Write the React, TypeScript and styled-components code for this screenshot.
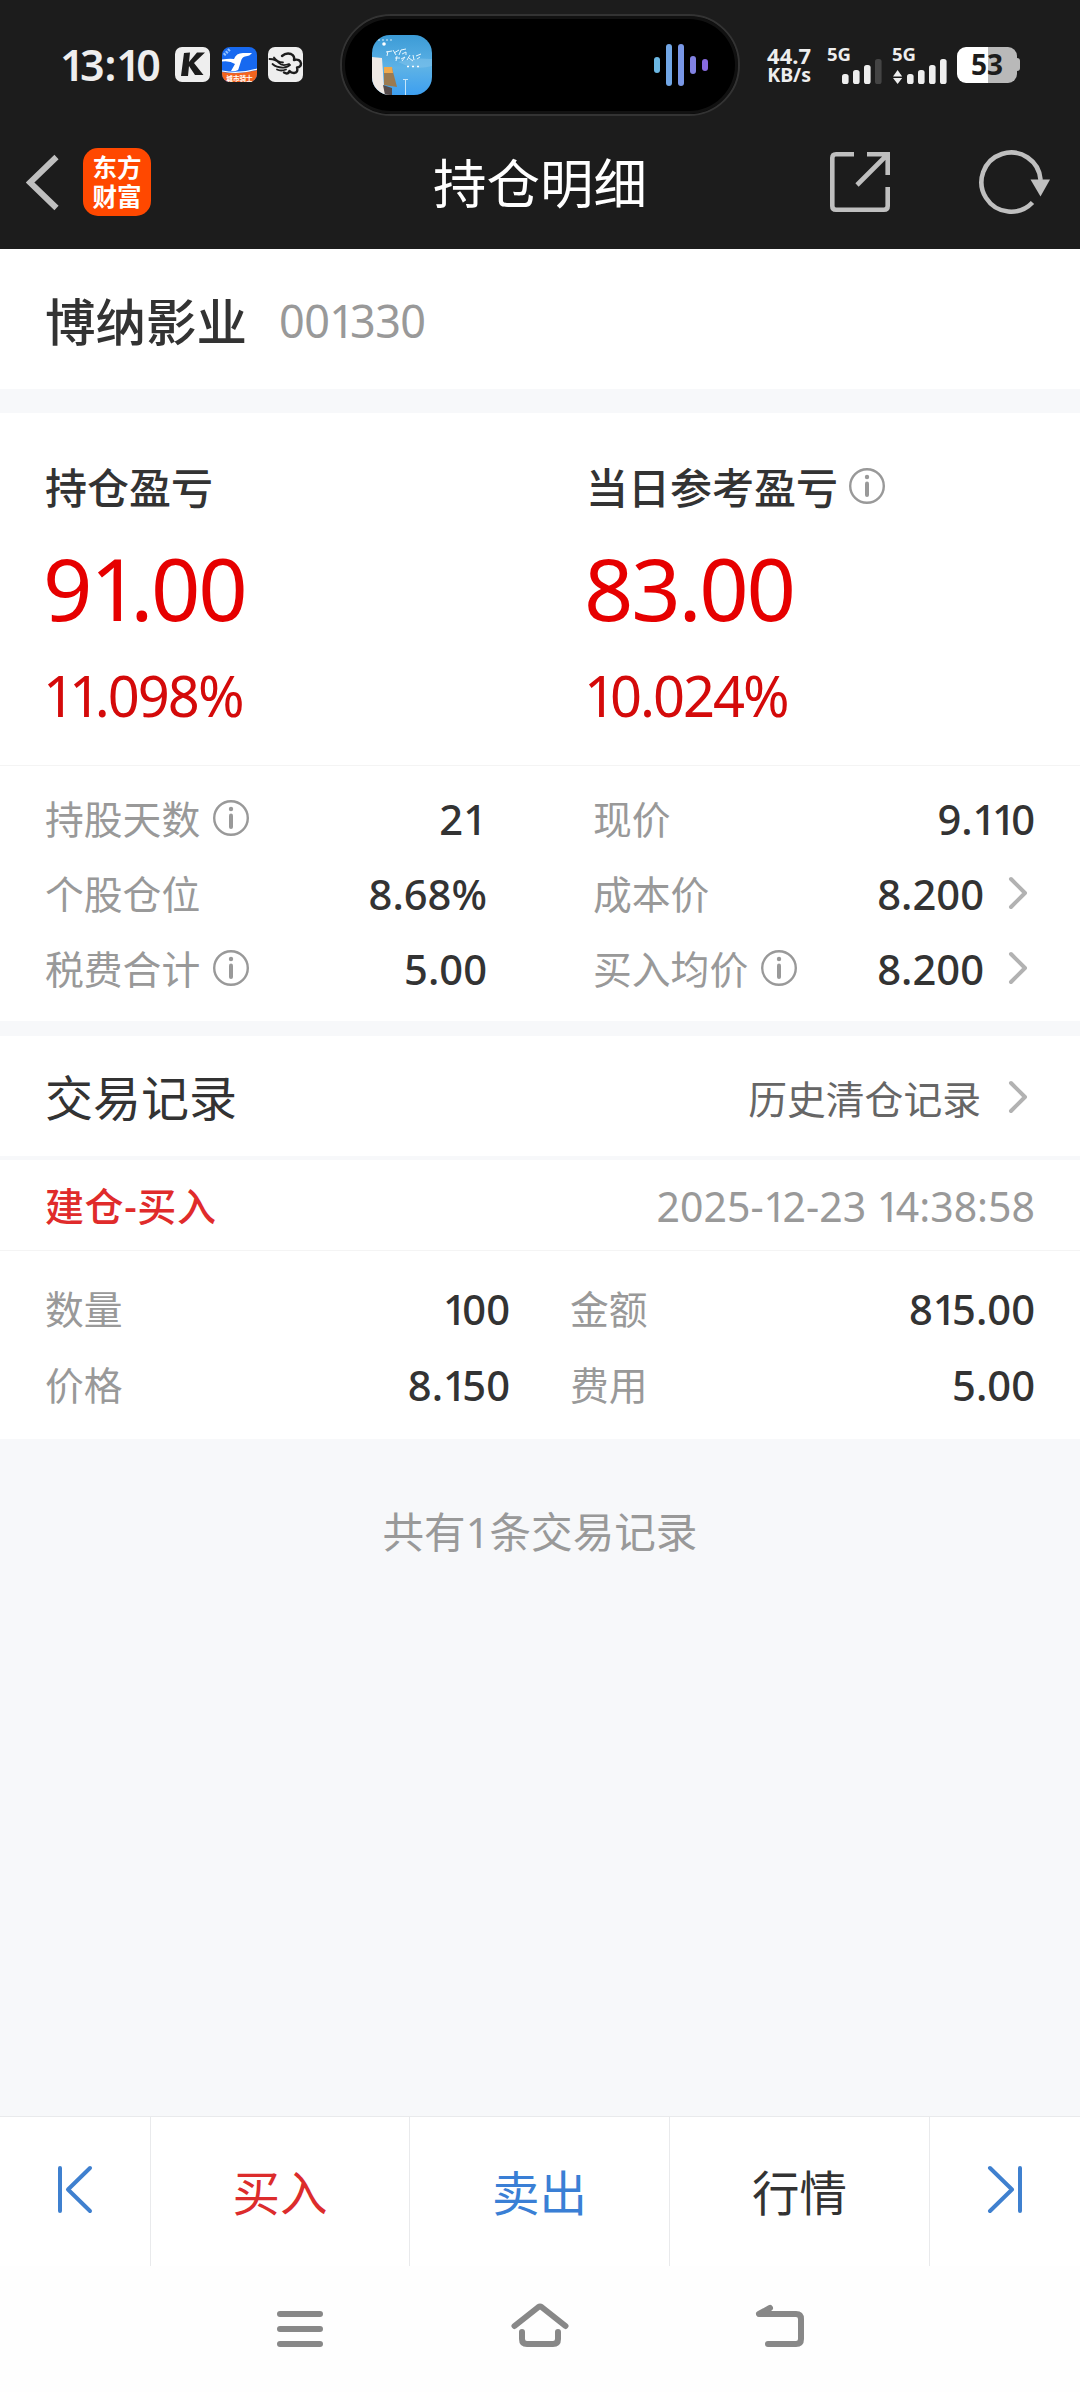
import React from "react";
import styled, { createGlobalStyle } from "styled-components";

const Global = createGlobalStyle`
  * { box-sizing: border-box; }
  body { margin: 0; background: #f7f8fa; }
`;

const Screen = styled.div`
  width: 1080px;
  height: 2392px;
  display: flex;
  flex-direction: column;
  background: #f7f8fa;
  color: #333;
  font-family: "Noto Sans", "Noto Sans CJK SC", sans-serif;
  overflow: hidden;
`;

const TopArea = styled.header`
  height: 249px;
  flex: none;
  background: #1c1c1c;
`;

const StatusBar = styled.div`
  height: 129px;
  display: flex;
  align-items: center;
  padding-left: 60px;
`;

const Clock = styled.span`
  width: 115px;
  height: 60px;
  line-height: 60px;
  font-size: 43px;
  font-weight: 600;
  color: #eee;
  white-space: nowrap;
`;

const AppIcons = styled.div`
  display: flex;
  gap: 11.5px;
  width: 165px;
  svg { display: block; }
`;

const Island = styled.div`
  width: 400px;
  height: 102px;
  border: 2.5px solid #333;
  border-radius: 51px;
  background: #000;
  box-shadow: inset 0 0 0 3px #111;
  display: flex;
  align-items: center;
  justify-content: space-between;
  padding: 0 30px;
`;

const Speed = styled.div`
  width: 48px;
  margin-left: 23px;
  display: flex;
  flex-direction: column;
  align-items: flex-end;
  color: #eee;
  font-weight: 700;
  line-height: 20px;
  white-space: nowrap;
`;

const SpeedValue = styled.span`
  font-size: 22px;
`;

const SpeedUnit = styled.span`
  font-size: 19.5px;
`;

const Signal = styled.div<{ $gap: number; $width: number }>`
  width: ${(p) => p.$width}px;
  margin-left: ${(p) => p.$gap}px;
  height: 38px;
  display: flex;
  flex-direction: column;
  color: #eee;
  svg { display: block; align-self: flex-end; }
`;

const SignalType = styled.span`
  height: 13px;
  line-height: 15px;
  font-size: 18.5px;
  font-weight: 700;
`;

const Battery = styled.div`
  width: 60px;
  height: 36px;
  margin-left: 10px;
  border-radius: 9px;
  background: linear-gradient(90deg, #fff 51.5%, #b9b9b9 51.5%);
  color: #1c1c1c;
  font-size: 28px;
  font-weight: 700;
  line-height: 35px;
  text-align: center;
`;

const BatteryCap = styled.div`
  width: 3px;
  height: 13px;
  border-radius: 0 3px 3px 0;
  background: #b9b9b9;
`;

const NavBar = styled.div`
  height: 104px;
  display: grid;
  grid-template-columns: 360px 1fr 360px;
`;

const NavLeft = styled.div`
  display: flex;
  align-items: center;
  padding: 0 0 3px 26px;
  gap: 22px;
`;

const Logo = styled.div`
  width: 68px;
  height: 68px;
  border-radius: 15px;
  background: #ff4800;
  display: flex;
  flex-direction: column;
  align-items: center;
  padding-top: 4px;
`;

const LogoLine = styled.span`
  height: 29px;
  line-height: 29px;
  font-family: "Noto Sans CJK SC", sans-serif;
  font-weight: 700;
  font-size: 24.5px;
  color: #fff;
`;

const NavTitle = styled.h1`
  margin: 0;
  height: 109px;
  line-height: 109px;
  text-align: center;
  font-size: 53.5px;
  font-weight: 400;
  color: #fff;
`;

const NavRight = styled.div`
  display: flex;
  align-items: center;
  justify-content: flex-end;
  gap: 88px;
  padding: 0 29px 3px 0;
`;

const StockStrip = styled.section`
  height: 140px;
  flex: none;
  background: #fff;
  display: flex;
  align-items: center;
  padding: 0 45px;
  gap: 32px;
`;

const StockName = styled.span`
  font-size: 50.5px;
  font-weight: 500;
`;

const StockCode = styled.span`
  padding-top: 3px;
  font-size: 45px;
  letter-spacing: -0.6px;
  color: #999;
`;

const Band = styled.div<{ $h: number }>`
  height: ${(p) => p.$h}px;
  flex: none;
`;

const ProfitSection = styled.section`
  height: 353px;
  flex: none;
  background: #fff;
  border-bottom: 1px solid #f4f4f4;
  display: grid;
  grid-template-columns: 541px 1fr;
  padding: 45px 0 0 45px;
`;

const InfoIcon = styled.svg`
  display: block;
  margin-top: 1px;
`;

const ProfitTitle = styled.div`
  height: 60px;
  display: flex;
  align-items: center;
  gap: 12px;
  font-size: 42px;
  font-weight: 500;
  line-height: 60px;
  ${InfoIcon} { margin: -5px 0 0 -1px; }
`;

const ProfitAmount = styled.div`
  height: 90px;
  margin-top: 25px;
  margin-left: -2px;
  line-height: 90px;
  font-size: 86.5px;
  letter-spacing: -2.3px;
  color: #e60000;
`;

const ProfitRate = styled.div`
  height: 60px;
  margin-top: 32px;
  margin-left: -2px;
  line-height: 60px;
  font-size: 56px;
  letter-spacing: -2px;
  color: #d40a0a;
`;

const DetailGrid = styled.section<{ $gap: number; $row: number; $pad: string }>`
  flex: none;
  background: #fff;
  display: grid;
  grid-template-columns: 1fr 1fr;
  column-gap: ${(p) => p.$gap}px;
  grid-auto-rows: ${(p) => p.$row}px;
  padding: ${(p) => p.$pad};
`;

const Field = styled.div`
  display: flex;
  align-items: center;
  justify-content: space-between;
`;

const FieldLabel = styled.span`
  display: flex;
  align-items: center;
  gap: 12.5px;
  padding-bottom: 3px;
  font-size: 38.8px;
  color: #999;
`;

const FieldValue = styled.span`
  display: flex;
  align-items: center;
  font-size: 41.7px;
  font-weight: 500;
`;

const RecordHead = styled.section`
  height: 120px;
  flex: none;
  background: #fff;
  display: flex;
  align-items: center;
  justify-content: space-between;
  padding: 0 45px;
`;

const RecordTitle = styled.h2`
  margin: 0;
  padding-bottom: 2px;
  font-size: 48px;
  font-weight: 400;
`;

const HistoryLink = styled.span`
  display: flex;
  align-items: center;
  gap: 3px;
  padding-top: 2px;
  font-size: 38.8px;
  color: #666;
  svg { margin-top: 2px; }
`;

const RecordRow = styled.div`
  height: 91px;
  flex: none;
  background: #fff;
  border-bottom: 1px solid #f4f4f4;
  display: flex;
  align-items: center;
  justify-content: space-between;
  padding: 0 45px;
`;

const RecordType = styled.span`
  padding-bottom: 2px;
  font-size: 39px;
  font-weight: 500;
  letter-spacing: 0.6px;
  color: #e02b2b;
`;

const RecordTime = styled.time`
  padding-top: 2px;
  font-size: 41px;
  color: #999;
`;

const Total = styled.p`
  margin: 63px 0 0;
  height: 60px;
  line-height: 60px;
  text-align: center;
  font-size: 41.6px;
  color: #999;
`;

const ActionBar = styled.nav`
  height: 150px;
  margin-top: auto;
  flex: none;
  background: #fff;
  border-top: 1px solid #e9eaec;
  display: grid;
  grid-template-columns: 151px 259px 260px 260px 150px;
`;

const Action = styled.button<{ $color: string }>`
  border: 0;
  border-right: 1px solid #e9eaec;
  background: none;
  padding: 0 0 3px;
  display: flex;
  align-items: center;
  justify-content: center;
  font: 400 47.5px "Noto Sans", "Noto Sans CJK SC", sans-serif;
  color: ${(p) => p.$color};
  &:last-child { border-right: 0; }
`;

const SystemNav = styled.div`
  height: 126px;
  flex: none;
  background: #fefefe;
  display: flex;
  align-items: center;
  justify-content: center;
  gap: 180px;
`;

/* The numeral one is set tighter than the other figures. */
const One = styled.span`
  letter-spacing: -0.11em;
`;

const Num = ({ children }: { children: string }) => (
  <span>
    {children.split("").map((c, i) => (c === "1" && i < children.length - 1 ? <One key={i}>1</One> : c))}
  </span>
);

const Info = () => (
  <InfoIcon width="36" height="36" viewBox="0 0 36 36" fill="none">
    <circle cx="18" cy="18" r="16.8" stroke="#999" strokeWidth="2.4" />
    <circle cx="18" cy="9" r="2.2" fill="#999" />
    <path d="M18 15.5V27" stroke="#999" strokeWidth="4" strokeLinecap="round" />
  </InfoIcon>
);

const Chevron = () => (
  <svg width="51" height="36" viewBox="0 0 51 36" fill="none">
    <path d="M27 3L41 17L27 31" stroke="#b2b2b2" strokeWidth="4" strokeLinecap="round" strokeLinejoin="round" />
  </svg>
);

const Bars = ({ dimLast, arrows }: { dimLast?: boolean; arrows?: boolean }) => {
  const tops = [15, 11, 6, 0];
  return (
    <svg width={arrows ? 55 : 40} height="25" viewBox={arrows ? "-15 0 55 25" : "0 0 40 25"}>
      {tops.map((t, i) => (
        <rect key={i} x={i * 11} y={t} width="6.6" height={25 - t} rx="2.6" fill={dimLast && i === 3 ? "#444" : "#eee"} />
      ))}
      {arrows && <path d="M-14 17.5L-9.4 11L-4.8 17.5ZM-14 19L-9.4 25L-4.8 19Z" fill="#eee" />}
    </svg>
  );
};

const profits = [
  { title: "持仓盈亏", amount: "91.00", rate: "11.098%", info: false },
  { title: "当日参考盈亏", amount: "83.00", rate: "10.024%", info: true },
];

const details = [
  { label: "持股天数", value: "21", info: true },
  { label: "现价", value: "9.110" },
  { label: "个股仓位", value: "8.68%" },
  { label: "成本价", value: "8.200", more: true },
  { label: "税费合计", value: "5.00", info: true },
  { label: "买入均价", value: "8.200", info: true, more: true },
];

const trade = [
  { label: "数量", value: "100" },
  { label: "金额", value: "815.00" },
  { label: "价格", value: "8.150" },
  { label: "费用", value: "5.00" },
];

const waves = [
  [16, "#6cb8e4"],
  [42, "#72a7e6"],
  [42, "#7997e6"],
  [18, "#8182e2"],
  [12, "#886bdf"],
] as const;

const FieldItem = ({ label, value, info, more }: { label: string; value: string; info?: boolean; more?: boolean }) => (
  <Field>
    <FieldLabel>
      <span>{label}</span>
      {info && <Info />}
    </FieldLabel>
    <FieldValue>
      <Num>{value}</Num>
      {more && <Chevron />}
    </FieldValue>
  </Field>
);

export default function App() {
  return (
    <Screen>
      <Global />
      <TopArea>
        <StatusBar>
          <Clock><Num>13:10</Num></Clock>
          <AppIcons>
            <svg width="35" height="35" viewBox="0 0 35 35">
              <rect width="35" height="35" rx="7" fill="#eee" />
              <path d="M9 6L15 5.5L14 15L22 5.5H30L19 16L28.5 28H20L14 19L13 29H6Z" fill="#1c1c1c" />
            </svg>
            <svg width="35" height="35" viewBox="0 0 35 35">
              <defs>
                <clipPath id="rider"><rect width="35" height="35" rx="8" /></clipPath>
              </defs>
              <g clipPath="url(#rider)">
                <rect width="35" height="35" fill="#1769f0" />
                <path d="M0 25Q17 28 35 23V35H0Z" fill="#f4641e" />
                <path d="M0 24Q17 27.5 35 22" stroke="#fff" strokeWidth="1.2" fill="none" />
                <path d="M12 12Q14 6 21 6H30Q28 9 23 9.5Q20 10 19 14L16.5 22Q16 24.5 9 24L13 17Q8 13.5 0 14.5V12.5Q7 11.5 12 12Z" fill="#fff" />
                <path d="M2 8L8 2" stroke="#8fc0ff" strokeWidth="3" strokeDasharray="2 1" />
              </g>
              <text x="17.5" y="33.5" fontSize="6.6" fontWeight="700" textAnchor="middle" fill="#fff" fontFamily="Noto Sans CJK SC">城市骑士</text>
            </svg>
            <svg width="35" height="35" viewBox="0 0 35 35" fill="none" stroke="#1c1c1c" strokeLinecap="round" strokeLinejoin="round">
              <rect width="35" height="35" rx="7" fill="#eee" stroke="none" />
              <path d="M1.5 12Q8 12 11 16Q14 19.5 21 17M6 10.5Q9 15 15 15.5M4.5 17Q9 21 16 20.5Q20 20 22 18M9 22.5Q13 24.5 18 22.5" strokeWidth="1.8" />
              <path d="M14 9Q18 5.5 23 7Q27 9 26 13Q32 11.5 33 16.5Q33 20 29 20.5Q30.5 25.5 26 26Q23 26 21.5 24Q20 28 16 25.5" strokeWidth="2.4" />
            </svg>
          </AppIcons>
          <Island>
            <svg width="60" height="60" viewBox="0 0 60 60">
              <defs>
                <clipPath id="cover"><rect width="60" height="60" rx="18" /></clipPath>
                <linearGradient id="sky" x1="0" y1="0" x2="0" y2="1">
                  <stop offset="0" stopColor="#3c9bd6" />
                  <stop offset="0.55" stopColor="#5db2e6" />
                  <stop offset="1" stopColor="#3d9ff0" />
                </linearGradient>
              </defs>
              <g clipPath="url(#cover)">
                <rect width="60" height="60" fill="url(#sky)" />
                <path d="M26 27Q40 22 60 24V31Q44 36 26 27Z" fill="#86c6ec" opacity="0.5" />
                <path d="M0 22L10 23L12 52L18 60H0Z" fill="#efe9e4" />
                <path d="M12 32L20 33L25 52L12 50Z" fill="#9b7a50" />
                <path d="M12 32H20L21 38H12Z" fill="#f0a94c" />
                <path d="M11 50L20 53V60H13Z" fill="#554b4b" />
                <path d="M33.5 60V44M31 44.5H36" stroke="#c4e5fa" strokeWidth="1" />
                <circle cx="12" cy="9" r="1.8" fill="#fff" />
                <path d="M6 5H21" stroke="#d3ecfa" strokeWidth="1" strokeDasharray="2 2" />
                <path d="M35 31.5H48" stroke="#fff" strokeWidth="1.4" strokeDasharray="2 3" />
                <path d="M14 17L20 16M16 16L15 21M21 15L24 20M22 18L27 15M27 20L29 15L34 14M30 19L34 17V20M23 23H28M25 21L24 26M29 24L33 22L30 26M35 25L38 20M37 23L41 26M41 20L42 25M44 21L49 19M45 24L48 22" stroke="#e6f5fd" strokeWidth="1" fill="none" />
              </g>
            </svg>
            <svg width="54" height="44" viewBox="0 0 54 44">
              {waves.map(([h, c], i) => (
                <rect key={i} x={i * 12} y={22 - h / 2} width="6" height={h} rx="3" fill={c} />
              ))}
            </svg>
          </Island>
          <Speed>
            <SpeedValue>44.7</SpeedValue>
            <SpeedUnit>KB/s</SpeedUnit>
          </Speed>
          <Signal $gap={16} $width={55}>
            <SignalType>5G</SignalType>
            <Bars dimLast />
          </Signal>
          <Signal $gap={10} $width={55}>
            <SignalType>5G</SignalType>
            <Bars arrows />
          </Signal>
          <Battery>53</Battery>
          <BatteryCap />
        </StatusBar>
        <NavBar>
          <NavLeft>
            <svg width="35" height="60" viewBox="0 0 35 60" fill="none">
              <path d="M30.5 5L4 30.5L30.5 56" stroke="#bfbfbf" strokeWidth="6" />
            </svg>
            <Logo>
              <LogoLine>东方</LogoLine>
              <LogoLine>财富</LogoLine>
            </Logo>
          </NavLeft>
          <NavTitle>持仓明细</NavTitle>
          <NavRight>
            <svg width="62" height="62" viewBox="0 0 62 62" fill="none" stroke="#bfbfbf" strokeWidth="4.6">
              <path d="M25 3.3H7Q3.3 3.3 3.3 7V55Q3.3 58.7 7 58.7H55Q58.7 58.7 58.7 55V36" />
              <path d="M38 3.3H58.7V24M58 4L28 34" />
            </svg>
            <svg width="72" height="66" viewBox="0 0 72 66" fill="none">
              <path d="M53.5 53.5A29.6 29.6 0 1 1 61.6 31" stroke="#bfbfbf" strokeWidth="4.6" />
              <path d="M51.5 30.5H71L61.5 47.5Z" fill="#bfbfbf" />
            </svg>
          </NavRight>
        </NavBar>
      </TopArea>

      <StockStrip>
        <StockName>博纳影业</StockName>
        <StockCode><Num>001330</Num></StockCode>
      </StockStrip>
      <Band $h={24} />

      <ProfitSection>
        {profits.map((p) => (
          <div key={p.title}>
            <ProfitTitle>
              <span>{p.title}</span>
              {p.info && <Info />}
            </ProfitTitle>
            <ProfitAmount><Num>{p.amount}</Num></ProfitAmount>
            <ProfitRate><Num>{p.rate}</Num></ProfitRate>
          </div>
        ))}
      </ProfitSection>

      <DetailGrid $gap={106} $row={75} $pad="15px 45px">
        {details.map((d) => <FieldItem key={d.label} {...d} />)}
      </DetailGrid>
      <Band $h={15} />

      <RecordHead>
        <RecordTitle>交易记录</RecordTitle>
        <HistoryLink>
          <span>历史清仓记录</span>
          <Chevron />
        </HistoryLink>
      </RecordHead>
      <Band $h={4} />
      <RecordRow>
        <RecordType>建仓-买入</RecordType>
        <RecordTime><Num>2025-12-23 14:38:58</Num></RecordTime>
      </RecordRow>
      <DetailGrid $gap={60} $row={76} $pad="19px 45px 17px">
        {trade.map((d) => <FieldItem key={d.label} {...d} />)}
      </DetailGrid>
      <Total>共有1条交易记录</Total>

      <ActionBar>
        <Action $color="#3a7fd5" aria-label="上一只">
          <svg width="38" height="50" viewBox="0 0 38 50" fill="none" stroke="#3f80cf" strokeWidth="4" strokeLinecap="round" strokeLinejoin="round">
            <path d="M4 3V46M34 3L12 24.5L34 46" />
          </svg>
        </Action>
        <Action $color="#dc2c2c">买入</Action>
        <Action $color="#3a7fd5">卖出</Action>
        <Action $color="#333">行情</Action>
        <Action $color="#3a7fd5" aria-label="下一只">
          <svg width="38" height="50" viewBox="0 0 38 50" fill="none" stroke="#3f80cf" strokeWidth="4" strokeLinecap="round" strokeLinejoin="round">
            <path d="M34 3V46M4 3L26 24.5L4 46" />
          </svg>
        </Action>
      </ActionBar>
      <SystemNav>
        <svg width="60" height="60" viewBox="0 0 60 60" stroke="#888" strokeWidth="6" strokeLinecap="round">
          <path d="M10 15H50M10 30H50M10 45H50" />
        </svg>
        <svg width="60" height="60" viewBox="0 0 60 60" fill="none" stroke="#888" strokeWidth="6" strokeLinecap="round" strokeLinejoin="round">
          <path d="M4.5 27L28.5 8Q30 7 31.5 8L55.5 27M12 33V40Q12 45 17 45H43Q48 45 48 40V33" />
        </svg>
        <svg width="60" height="60" viewBox="0 0 60 60" fill="none" stroke="#888" strokeWidth="6" strokeLinecap="round" strokeLinejoin="round">
          <path d="M20 9L9 15H46Q51 15 51 20V40Q51 45 46 45H18" />
        </svg>
      </SystemNav>
    </Screen>
  );
}
